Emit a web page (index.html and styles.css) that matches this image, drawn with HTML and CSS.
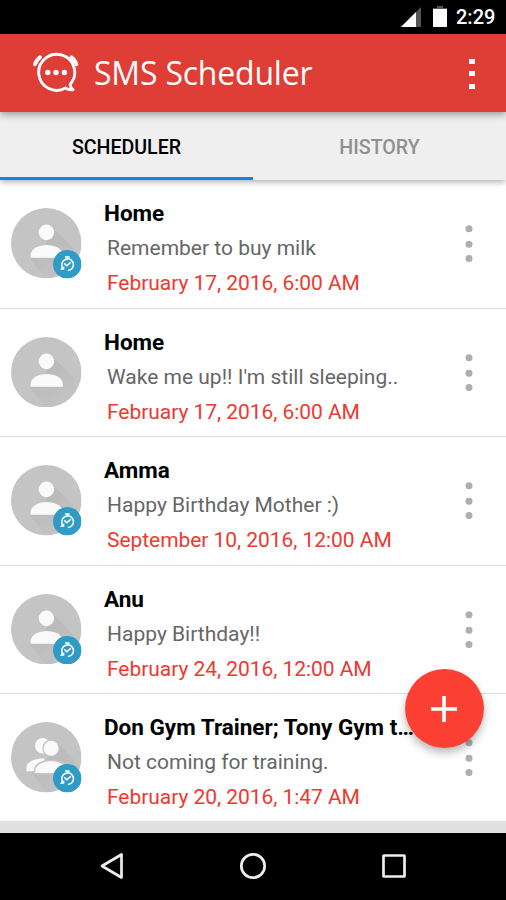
FILE: index.html
```html
<!DOCTYPE html>
<html lang="en">
<head>
<meta charset="utf-8">
<title>SMS Scheduler</title>
<link rel="stylesheet" href="styles.css">
</head>
<body>
<svg class="defs" aria-hidden="true">
  <defs>
    <linearGradient id="shade" x1="0.2" y1="0" x2="0.8" y2="1">
      <stop offset="0" stop-color="#000" stop-opacity=".07"/>
      <stop offset="1" stop-color="#000" stop-opacity="0"/>
    </linearGradient>
    <symbol id="person" viewBox="0 0 70 70">
      <circle cx="35" cy="35" r="35" fill="#c4c4c4"/>
      <path d="M41 19 62 40 65 53 53 65 35 70 19 51 35 35Z" fill="url(#shade)"/>
      <circle cx="35.2" cy="24.2" r="7.7" fill="#fafafa"/>
      <path d="M19.500 49.400V47c0-6.800 8.500-10.300 16-10.300s16 3.500 16 10.300v2.400Z" fill="#fafafa"/>
    </symbol>
    <symbol id="people" viewBox="0 0 70 70">
      <circle cx="35" cy="35" r="35" fill="#c4c4c4"/>
      <path d="M45 20 63 38 66 50 53 65 35 70 20 50 39 34Z" fill="url(#shade)"/>
      <circle cx="31.500" cy="23.500" r="7.700" fill="#fafafa"/>
      <path d="M15.200 49V45.500c0-5.500 8-9.800 18-9.300v12.800Z" fill="#fafafa"/>
      <circle cx="39.800" cy="26" r="8.700" fill="#c4c4c4"/>
      <circle cx="39.800" cy="26" r="7.400" fill="#fafafa"/>
      <path d="M23.300 51.500V48.500c0-6.800 8.500-10.500 16.500-10.500s16.500 3.700 16.500 10.500v3Z" fill="#fafafa" stroke="#c4c4c4" stroke-width="1.500"/>
    </symbol>
    <symbol id="timer" viewBox="0 0 28 28">
      <circle cx="14" cy="14" r="14" fill="#2f9bc6"/>
      <g fill="none" stroke="#fff" stroke-width="1.500">
        <path d="M8.800 15.500a5.700 5.700 0 1 1 5.800 4.600"/>
        <path d="M11.800 6.800h4.600M14.100 7v2.500M11.100 13.200l2.500 2.300 3.900-3.500"/>
        <path d="M8.900 15.200v3.200"/>
      </g>
      <path d="M6.500 19.500h4.600v-3.500Z" fill="#fff"/>
    </symbol>
    <symbol id="dots" viewBox="0 0 8 40">
      <g fill="#aeaeae"><circle cx="4" cy="4.800" r="3.500"/><circle cx="4" cy="20.200" r="3.500"/><circle cx="4" cy="34.500" r="3.500"/></g>
    </symbol>
  </defs>
</svg>
<div class="screen">
  <div class="status">
    <svg class="signal" width="20" height="20" viewBox="0 0 20 20"><path d="M0 20 20 0v20Z" fill="#555"/><path d="M0 20 15 5v15Z" fill="#fff"/></svg>
    <svg class="battery" width="14" height="21" viewBox="0 0 14 21"><path d="M4 0h6v2h4v2H0V2h4Z" fill="#555"/><path d="M0 3h14v18H0Z" fill="#fff"/></svg>
    <span class="clock">2:29</span>
  </div>
  <header class="appbar">
    <svg class="logo" width="48" height="42" viewBox="0 0 48 42" fill="none" stroke="#fff" stroke-linecap="round" stroke-linejoin="round">
      <path stroke-width="2.900" d="M38.200 32.200a18 18 0 1 0-4.700 3.800c2.200 1.500 4.600 2.200 7.600 1.600-2-1.400-2.900-3-2.900-5.400Z"/>
      <path stroke-width="3.900" d="M3 12.300c.9-3.100 2.500-5.400 5-7M44.400 12.300c-.9-3.100-2.500-5.400-5-7"/>
      <g fill="#fff" stroke="none"><circle cx="15.800" cy="20.500" r="2.700"/><circle cx="24" cy="20.500" r="2.700"/><circle cx="32.400" cy="20.500" r="2.700"/></g>
    </svg>
    <h1 class="title">SMS Scheduler</h1>
    <div class="overflow"><i></i><i></i><i></i></div>
  </header>
  <nav class="tabs">
    <div class="tab active">SCHEDULER</div>
    <div class="tab">HISTORY</div>
  </nav>
  <main class="list">
    <article class="row">
      <div class="avatar"><svg class="face"><use href="#person"/></svg><svg class="badge"><use href="#timer"/></svg></div>
      <div class="text"><h2>Home</h2><p>Remember to buy milk</p><time>February 17, 2016, 6:00 AM</time></div>
      <svg class="more"><use href="#dots"/></svg>
    </article>
    <article class="row">
      <div class="avatar"><svg class="face"><use href="#person"/></svg></div>
      <div class="text"><h2>Home</h2><p>Wake me up!! I'm still sleeping..</p><time>February 17, 2016, 6:00 AM</time></div>
      <svg class="more"><use href="#dots"/></svg>
    </article>
    <article class="row">
      <div class="avatar"><svg class="face"><use href="#person"/></svg><svg class="badge"><use href="#timer"/></svg></div>
      <div class="text"><h2>Amma</h2><p>Happy Birthday Mother :)</p><time>September 10, 2016, 12:00 AM</time></div>
      <svg class="more"><use href="#dots"/></svg>
    </article>
    <article class="row">
      <div class="avatar"><svg class="face"><use href="#person"/></svg><svg class="badge"><use href="#timer"/></svg></div>
      <div class="text"><h2>Anu</h2><p>Happy Birthday!!</p><time>February 24, 2016, 12:00 AM</time></div>
      <svg class="more"><use href="#dots"/></svg>
    </article>
    <article class="row">
      <div class="avatar"><svg class="face"><use href="#people"/></svg><svg class="badge"><use href="#timer"/></svg></div>
      <div class="text"><h2>Don Gym Trainer; Tony Gym t…</h2><p>Not coming for training.</p><time>February 20, 2016, 1:47 AM</time></div>
      <svg class="more"><use href="#dots"/></svg>
    </article>
  </main>
  <footer class="navbar">
    <svg width="24" height="28" viewBox="0 0 24 28"><path d="M2 14 21.500 2.500v23Z"/></svg>
    <svg width="28" height="28" viewBox="0 0 28 28"><circle cx="14" cy="14" r="11.700"/></svg>
    <svg width="24" height="28" viewBox="0 0 24 28"><rect x="1.500" y="3.500" width="21" height="21" rx=".5"/></svg>
  </footer>
  <button class="fab" aria-label="Add"><svg width="26" height="26" viewBox="0 0 26 26"><path d="M0 13h26M13 0v26" stroke="#fff" stroke-width="3.600"/></svg></button>
</div>
</body>
</html>
```
FILE: styles.css
```css
* { box-sizing: border-box; margin: 0; padding: 0; }
body { background: #fff; font-family: Roboto, "Liberation Sans", sans-serif; }
.defs { position: absolute; width: 0; height: 0; }
.screen { position: relative; width: 506px; height: 900px; display: flex; flex-direction: column; overflow: hidden; }

.status { height: 33.500px; flex: none; background: #000; display: flex; justify-content: flex-end; align-items: flex-start; padding: 6px 11px 0 0; }
.signal { margin: 1px 12px 0 0; }
.battery { margin-right: 9px; }
.clock { color: #fff; font-size: 20px; font-weight: 500; line-height: 23px; width: 39px; white-space: nowrap; }

.appbar { position: relative; z-index: 2; height: 78.500px; flex: none; background: #df3e36; display: flex; align-items: center; padding: 0 31px 0 32px; box-shadow: 0 2px 8px rgba(0, 0, 0, .4); }
.logo { flex: none; margin-right: 14px; }
.title { flex: 1; color: #fff; font: 400 32px/44px "Open Sans", sans-serif; letter-spacing: -.2px; white-space: nowrap; }
.overflow { display: flex; flex-direction: column; gap: 7.500px; margin-top: 2px; }
.overflow i { width: 6px; height: 5px; background: #fff; }

.tabs { position: relative; z-index: 1; height: 68px; flex: none; background: #efefef; display: flex; box-shadow: 0 1px 7px rgba(0, 0, 0, .4); }
.tab { flex: 1; text-align: center; font-size: 19.600px; font-weight: 500; line-height: 71px; color: #909090; }
.tab.active { color: #000; border-bottom: 3px solid #1c82e0; }

.list { flex: 1; background: #e0e0e0; }
.row { height: 128.500px; background: #fff; border-bottom: 1.500px solid #dcdcdc; display: flex; align-items: flex-start; padding: 17px 33px 0 11px; }
.row:last-child { height: 127px; border-bottom-color: #fff; }
.avatar { position: relative; width: 70.500px; height: 70.500px; flex: none; margin: 11px 22.500px 0 0; }
.face { display: block; width: 70.500px; height: 70.500px; }
.badge { position: absolute; left: 42px; top: 42px; width: 28.500px; height: 28.500px; }
.text { flex: 1; min-width: 0; white-space: nowrap; margin-top: -1px; }
.text h2 { font-size: 22.500px; font-weight: 700; line-height: 34px; color: #000; }
.text p { font-size: 21px; line-height: 37px; color: #666; padding-left: 3px; }
.text time { display: block; font-size: 21px; line-height: 32px; letter-spacing: -.05px; color: #ee3830; padding-left: 3px; }
.more { width: 8px; height: 40px; flex: none; margin-top: 27px; }

.navbar { height: 67px; flex: none; background: #000; display: flex; justify-content: space-between; align-items: center; padding: 0 100px 1px; }
.navbar svg { fill: none; stroke: #eee; stroke-width: 2.700; stroke-linejoin: round; }

.fab { position: absolute; z-index: 3; left: 404.500px; top: 669px; width: 79px; height: 79px; border: 0; border-radius: 50%; background: #fc4034; display: flex; align-items: center; justify-content: center; box-shadow: 0 5px 9px rgba(0, 0, 0, .27); }
```
